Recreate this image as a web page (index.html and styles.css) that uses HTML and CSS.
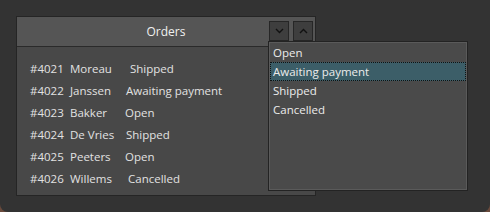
FILE: index.html
```html
<!DOCTYPE html>
<html>
<head>
<meta charset="utf-8">
<link rel="stylesheet" href="styles.css">
</head>
<body>
<div class="window">
  <div class="panel">
    <div class="header">
      <span class="title">Orders</span>
      <div class="buttons">
        <button class="btn"><svg width="9" height="6" viewBox="0 0 9 6"><path d="M1 1 L4.5 4.5 L8 1" fill="none" stroke="#111" stroke-width="1.4"/></svg></button>
        <button class="btn"><svg width="9" height="6" viewBox="0 0 9 6"><path d="M1 5 L4.5 1.5 L8 5" fill="none" stroke="#111" stroke-width="1.4"/></svg></button>
      </div>
    </div>
    <div class="rows">
      <div class="row"><span class="id">#4021</span><span class="name">Moreau</span><span class="status" style="--off:5px">Shipped</span></div>
      <div class="row"><span class="id">#4022</span><span class="name">Janssen</span><span class="status" style="--off:1px">Awaiting payment</span></div>
      <div class="row"><span class="id">#4023</span><span class="name">Bakker</span><span class="status" style="--off:0px">Open</span></div>
      <div class="row"><span class="id">#4024</span><span class="name">De Vries</span><span class="status" style="--off:1px">Shipped</span></div>
      <div class="row"><span class="id">#4025</span><span class="name">Peeters</span><span class="status" style="--off:0px">Open</span></div>
      <div class="row"><span class="id">#4026</span><span class="name">Willems</span><span class="status" style="--off:3px">Cancelled</span></div>
    </div>
    <ul class="dropdown">
      <li>Open</li>
      <li class="selected">Awaiting payment</li>
      <li>Shipped</li>
      <li>Cancelled</li>
    </ul>
  </div>
</div>
</body>
</html>
```

FILE: styles.css
```css
html {
  background: #6a4a3c;
}
body {
  margin: 0;
  font-family: "Open Sans", "Noto Sans", sans-serif;
  font-size: 11.5px;
  color: #e2e2e2;
}
.window {
  width: 490px;
  height: 212px;
  background: #333333;
  border-radius: 0 0 8px 8px;
  padding: 16px 0 0 16px;
  box-sizing: border-box;
}
.panel {
  position: relative;
  width: 300px;
  height: 180px;
  box-sizing: border-box;
  background: #484848;
  border: 1px solid #252525;
}
.header {
  height: 29px;
  background: #555555;
  border-bottom: 1px solid #2a2a2a;
  display: flex;
  align-items: center;
  justify-content: center;
  position: relative;
}
.title {
  color: #f0f0f0;
  font-size: 12px;
}
.buttons {
  position: absolute;
  right: 2px;
  top: 4px;
  display: flex;
  gap: 4px;
}
.btn {
  width: 20px;
  height: 20px;
  padding: 0;
  margin: 0;
  background: #3e3e3e;
  border: 1px solid #262626;
  display: flex;
  align-items: center;
  justify-content: center;
}
.rows {
  padding: 11px 0 0 13px;
}
.row {
  height: 22px;
  line-height: 22px;
  display: flex;
  white-space: nowrap;
}
.id {
  width: 40px;
}
.name {
  width: 55px;
}
.status {
  margin-left: var(--off);
}
.dropdown {
  position: absolute;
  left: 251px;
  top: 24px;
  width: 200px;
  height: 150px;
  box-sizing: border-box;
  margin: 0;
  padding: 1px 0 0 0;
  list-style: none;
  background: #4a4a4a;
  border: 1px solid #232323;
  box-shadow: inset 0 0 0 1px #5a5a5a;
}
.dropdown li {
  height: 19px;
  line-height: 19px;
  padding-left: 3px;
  margin: 0 1px;
  box-sizing: border-box;
  color: #ececec;
}
.dropdown li.selected {
  background: #3c5e68;
  border: 1px dotted #111;
  padding-left: 2px;
  line-height: 17px;
}
```
